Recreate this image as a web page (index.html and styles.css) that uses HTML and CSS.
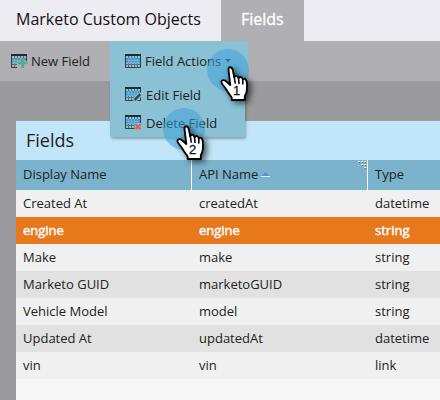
FILE: index.html
```html
<!DOCTYPE html>
<html lang="en">
<head>
<meta charset="utf-8">
<title>Marketo Custom Objects</title>
<link rel="stylesheet" href="styles.css">
</head>
<body>
<svg class="defs" aria-hidden="true">
  <defs>
    <symbol id="grid" viewBox="0 0 16 14">
      <path d="M1 5h14M1 7.5h14" stroke="#3a9bdc" stroke-width="2" stroke-dasharray="2.4 .6" />
      <path d="M3.5 2v2M6.5 2v2M9.5 2v2M12.5 2v2M3.5 9v4M6.5 9v4M9.5 9v4M12.5 9v4M1 10.5h14" fill="none" stroke="#5b6d77" />
      <path d="M.5 1v12.5h15V1" fill="none" stroke="#333d45" />
      <path d="M0 0h16v2H0z" fill="#25292d" />
    </symbol>
    <symbol id="hand" viewBox="0 0 30 38">
      <path d="M8.5 4Q8.2 1.3 10.2 1.2Q12.2 1.2 12.8 4L14.2 11Q17.2 8.2 18.5 12Q21.5 9.5 22.8 13.2Q25.8 11.8 26.7 15.5Q27.4 20 26.8 24.5Q26.5 28 24.8 30V34H11.7V31.5Q9.4 28.5 7.5 25.5Q5.5 22 2.6 18.5Q.4 15.5 2.2 14.5Q4.2 13.2 7.2 16.3L10.3 19Z" fill="#fff" stroke="#050505" stroke-width="1.9" stroke-linejoin="round" />
      <path d="M14.2 10.5L15.2 17M18.5 12L19 17.5M22.8 13.2V18" fill="none" stroke="#050505" stroke-width="1.6" stroke-linecap="round" />
    </symbol>
  </defs>
</svg>

<nav class="tabs">
  <span class="tab tab-first">Marketo Custom Objects</span>
  <span class="tab tab-active">Fields</span>
</nav>

<div class="toolbar">
  <span class="tool">
    <svg class="icon" viewBox="0 0 16 14"><use href="#grid" width="16" height="14" /><path d="M6 7h10v7H6z" fill="#b0afb4" /><path d="M11.5 4v10M6.5 9h10" stroke="#50ad87" stroke-width="2.6" /></svg>
    <span>New Field</span>
  </span>
  <div class="menu">
    <div class="item item-head">
      <svg class="icon" viewBox="0 0 16 14"><use href="#grid" width="16" height="14" /></svg>
      <span>Field Actions</span><i class="caret"></i>
    </div>
    <div class="options">
      <div class="item">
        <svg class="icon" viewBox="0 0 16 14"><use href="#grid" width="16" height="14" /><path d="M8 14l1-4 6-5 1 1v4l-4 4z" fill="#8ac1d4" /><path d="M9.5 13.2l5.8-6" stroke="#39454b" stroke-width="2.5" /></svg>
        <span>Edit Field</span>
      </div>
      <div class="item">
        <svg class="icon" viewBox="0 0 16 14"><use href="#grid" width="16" height="14" /><path d="M9.500 8h6.500v6h-6.500z" fill="#8ac1d4" /><path d="M10.500 9.200l5 5M15.500 9.200l-5 5" stroke="#dc6248" stroke-width="2.200" /></svg>
        <span>Delete Field</span>
      </div>
    </div>
  </div>
</div>

<main class="panel">
  <h1>Fields</h1>
  <div class="row head"><span>Display Name</span><span>API Name<svg class="sort" viewBox="0 0 9 5"><path d="M4.5 0L8.500 4H.5z" fill="#5f8fcb" /><path d="M0 4h9v1H0z" fill="#e5f0f5" /></svg>
    <svg class="grip" viewBox="0 0 8 8"><path d="M0 .5h8M3 3.5h5M6 6.5h2" stroke="#f4fafc" stroke-dasharray="2 1" /><path d="M1 1.5h7M4 4.5h4M7 7.5h1" stroke="#62717b" stroke-dasharray="1 2" /></svg></span><span>Type</span></div>
  <div class="row"><span>Created At</span><span>createdAt</span><span>datetime</span></div>
  <div class="row selected"><span>engine</span><span>engine</span><span>string</span></div>
  <div class="row"><span>Make</span><span>make</span><span>string</span></div>
  <div class="row alt"><span>Marketo GUID</span><span>marketoGUID</span><span>string</span></div>
  <div class="row"><span>Vehicle Model</span><span>model</span><span>string</span></div>
  <div class="row alt"><span>Updated At</span><span>updatedAt</span><span>datetime</span></div>
  <div class="row"><span>vin</span><span>vin</span><span>link</span></div>
</main>

<div class="pointer pointer-one"><svg viewBox="0 0 30 38"><use href="#hand" width="30" height="38" /></svg><b>1</b></div>
<div class="pointer pointer-two"><svg viewBox="0 0 30 38"><use href="#hand" width="30" height="38" /></svg><b>2</b></div>
</body>
</html>
```
FILE: styles.css
```css
* { box-sizing: border-box; }
body {
  margin: 0;
  width: 440px;
  height: 400px;
  overflow: hidden;
  background: #9b9a9f;
  color: #222;
  font: 13px/20px "Open Sans", sans-serif;
}
.defs { position: absolute; width: 0; height: 0; }
.tabs {
  display: flex;
  height: 41px;
  background: #edecf2;
  font-size: 16px;
  line-height: 39px;
  color: #111;
}
.tab-first { width: 221px; padding-left: 16px; white-space: nowrap; }
.tab-active { width: 83px; padding-left: 20px; background: #b0afb4; color: #fff; -webkit-text-stroke: .3px #fff; }
.toolbar {
  display: flex;
  height: 40px;
  background: #b0afb4;
}
.tool { display: flex; width: 110px; height: 40px; padding-left: 11px; align-items: center; gap: 4px; }
.icon { width: 16px; height: 14px; flex: none; overflow: visible; }
.menu {
  position: relative;
  z-index: 1;
  width: 138px;
  height: 96px;
  flex: none;
}
.options {
  width: 135px;
  height: 56px;
  background: #8ac1d4;
  border-radius: 0 0 2px 2px;
  box-shadow: 1px 2px 3px rgba(0, 0, 0, .3);
}
.item { display: flex; align-items: center; height: 28px; padding-left: 15px; gap: 5px; }
.options .icon { margin-top: -2px; }
.item-head { position: relative; z-index: 1; height: 40px; gap: 4px; background: #8ac1d4; }
.caret { margin-top: -1px; border: 3px solid transparent; border-top-color: #16303e; border-bottom: 0; }
.panel { margin-left: 16px; margin-top: 40px; height: 279px; background: #f6f6f6; }
h1 {
  margin: 0;
  height: 39px;
  padding-left: 10px;
  background: #c2e6f9;
  font-size: 18px;
  font-weight: 400;
  line-height: 39px;
}
.row {
  display: grid;
  grid-template-columns: 176px 176px 72px;
  height: 27px;
  line-height: 26px;
  background: #f0f0f0;
}
.row > span { padding-left: 7px; }
.alt { background: #e1e1e1; }
.selected { background: #e8781c; color: #fff; -webkit-text-stroke: .45px #fff; }
.head { height: 30px; line-height: 28px; background: #7bb3cd; }
.head > span { position: relative; border-right: 1px solid #fff; }
.head > span:last-child { border: 0; }
.sort { margin-left: 3px; width: 9px; height: 5px; vertical-align: 2px; }
.grip { position: absolute; top: 1px; right: 1px; width: 8px; height: 8px; }
.pointer { position: absolute; z-index: 2; width: 30px; height: 38px; }
.pointer-one { left: 220px; top: 66px; }
.pointer-two { left: 176px; top: 125px; }
.pointer::before {
  content: "";
  position: absolute;
  left: -13px;
  top: -17px;
  width: 42px;
  height: 42px;
  border-radius: 50%;
  background: rgba(62, 162, 220, .54);
}
.pointer svg {
  position: absolute;
  inset: 0;
  width: 30px;
  height: 38px;
  filter: drop-shadow(3px 2px 3px rgba(0, 0, 0, .65));
}
.pointer b {
  position: absolute;
  left: 11px;
  top: 17px;
  width: 11px;
  color: #111;
  font: 13px/15px "Liberation Sans", sans-serif;
  text-align: center;
  -webkit-text-stroke: .3px #111;
}
```
